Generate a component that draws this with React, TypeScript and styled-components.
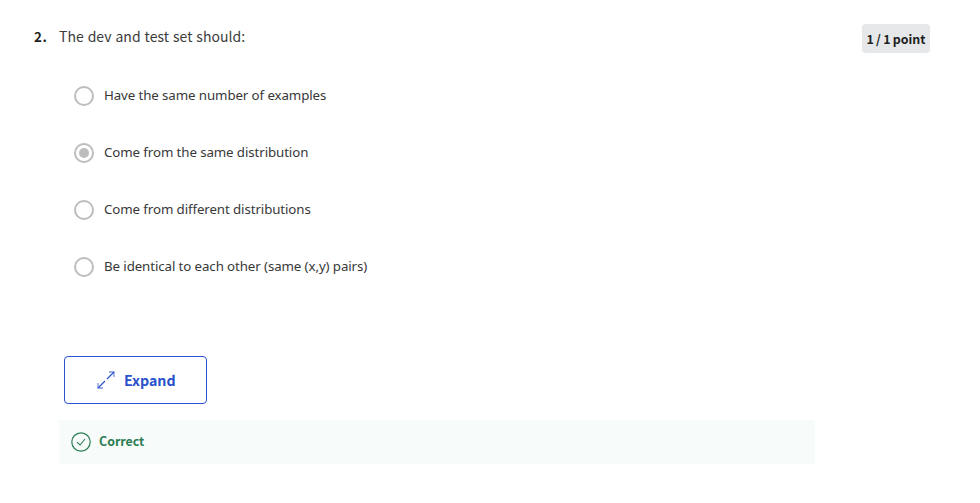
import React from "react";
import styled, { createGlobalStyle } from "styled-components";

const GlobalStyle = createGlobalStyle`
  * { box-sizing: border-box; }
  body {
    margin: 0;
    background: #fff;
    color: #1f1f1f;
    font-family: "Noto Sans CJK SC", "Noto Sans", sans-serif;
  }
`;

const Page = styled.main`
  height: 503px;
  padding: 24px 50px 0 34px;
`;

const Header = styled.header`
  display: flex;
  align-items: flex-start;
  height: 43px;
`;

const QuestionNumber = styled.span`
  width: 25px;
  font-size: 13.4px;
  line-height: 25px;
  font-weight: 700;
  letter-spacing: 0.5px;
`;

const Prompt = styled.h1`
  flex: 1;
  margin: 0;
  color: #3c3c3c;
  font-size: 14px;
  line-height: 24px;
  font-weight: 400;
  letter-spacing: 0.04px;
  word-spacing: 0.7px;
`;

const Points = styled.span`
  width: 68px;
  height: 29px;
  border-radius: 4px;
  background: #e5e7e8;
  font-size: 12.4px;
  line-height: 31px;
  font-weight: 700;
  text-align: center;
  white-space: nowrap;
  word-spacing: -0.5px;
`;

const Options = styled.div`
  padding-left: 40px;
`;

const Option = styled.label`
  display: flex;
  align-items: center;
  height: 57px;
`;

const Radio = styled.span<{ $checked?: boolean }>`
  display: grid;
  place-items: center;
  width: 20px;
  height: 20px;
  margin-right: 10px;
  border: 2px solid #bdbdbd;
  border-radius: 50%;

  &::after {
    content: "";
    width: 10px;
    height: 10px;
    border-radius: 50%;
    background: ${(p) => (p.$checked ? "#bdbdbd" : "transparent")};
  }
`;

const OptionText = styled.span`
  padding-bottom: 2px;
  color: #383838;
  font-family: "Noto Sans", sans-serif;
  font-size: 13.3px;
  line-height: 20px;
  letter-spacing: -0.1px;
`;

const ExpandButton = styled.button`
  display: flex;
  align-items: center;
  width: 143px;
  height: 48px;
  margin: 61px 0 16px 30px;
  padding: 0 0 1px 32px;
  border: 1px solid #2a52cc;
  border-radius: 4px;
  background: #fff;
  color: #2a52cc;
  font-family: inherit;
  font-size: 14.2px;
  font-weight: 700;

  svg { margin-right: 9px; }
`;

const Feedback = styled.section`
  display: flex;
  align-items: center;
  width: 756px;
  height: 44px;
  margin-left: 25px;
  padding-left: 12px;
  background: #f7fbf9;
  color: #2b7d55;
  font-size: 12.4px;
  font-weight: 700;

  svg { margin-right: 8px; }
`;

const FeedbackLabel = styled.span`
  padding-bottom: 2px;
`;

const ExpandIcon = () => (
  <svg width="18" height="18" viewBox="0 0 18 18" fill="none" stroke="currentColor">
    <path d="m1 17 7-7M10 8l7-7" strokeWidth="1.2" />
    <path d="M12 1h5v5M1 12v5h5" strokeWidth="1.3" strokeOpacity=".6" />
  </svg>
);

const CheckIcon = () => (
  <svg width="20" height="20" viewBox="0 0 20 20" fill="none" stroke="currentColor">
    <circle cx="10" cy="10" r="9.2" strokeWidth="1.2" />
    <path d="m6 10.2 3 2.8 5-6" strokeWidth="1.1" />
  </svg>
);

const options = [
  { text: "Have the same number of examples" },
  { text: "Come from the same distribution", checked: true },
  { text: "Come from different distributions" },
  { text: "Be identical to each other (same (x,y) pairs)" },
];

export default function App() {
  return (
    <>
      <GlobalStyle />
      <Page>
        <Header>
          <QuestionNumber>2.</QuestionNumber>
          <Prompt>The dev and test set should:</Prompt>
          <Points>1 / 1 point</Points>
        </Header>
        <Options>
          {options.map((o) => (
            <Option key={o.text}>
              <Radio $checked={o.checked} />
              <OptionText>{o.text}</OptionText>
            </Option>
          ))}
        </Options>
        <ExpandButton>
          <ExpandIcon />
          Expand
        </ExpandButton>
        <Feedback>
          <CheckIcon />
          <FeedbackLabel>Correct</FeedbackLabel>
        </Feedback>
      </Page>
    </>
  );
}
